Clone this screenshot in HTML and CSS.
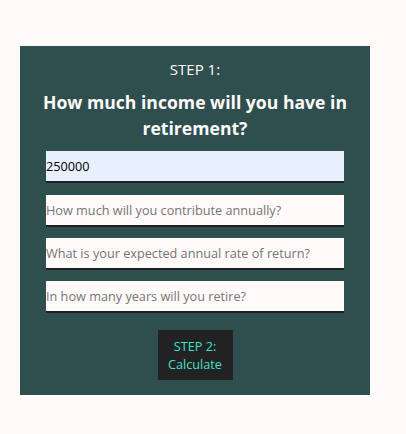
FILE: index.html
```html
<!DOCTYPE html>
<html>
<head>
<meta charset="utf-8">
<link rel="stylesheet" href="styles.css">
</head>
<body>
<div class="panel">
  <div class="step">STEP 1:</div>
  <h2 class="question">How much income will you have in retirement?</h2>
  <form class="fields">
    <input class="field filled" type="text" value="250000">
    <input class="field" type="text" placeholder="How much will you contribute annually?">
    <input class="field" type="text" placeholder="What is your expected annual rate of return?">
    <input class="field" type="text" placeholder="In how many years will you retire?">
    <button class="calc" type="button">STEP 2:<br>Calculate</button>
  </form>
</div>
</body>
</html>
```
FILE: styles.css
```css
html, body {
  margin: 0;
  padding: 0;
  background: #fffafa;
}
body {
  padding: 46px 0 0 20px;
  font-family: "Open Sans", "Noto Sans", sans-serif;
}
.panel {
  width: 350px;
  height: 349px;
  box-sizing: border-box;
  background: #2f4f4f;
  display: flex;
  flex-direction: column;
  align-items: center;
  padding-top: 13px;
}
.step {
  color: #fffafa;
  font-size: 15px;
  line-height: 20px;
}
.question {
  margin: 10px 0 0 0;
  color: #fffafa;
  font-size: 17.6px;
  font-weight: 700;
  line-height: 26px;
  text-align: center;
  width: 320px;
}
.fields {
  display: flex;
  flex-direction: column;
  align-items: center;
  margin-top: 10px;
  width: 100%;
}
.field {
  width: 298px;
  height: 32px;
  box-sizing: border-box;
  border: none;
  border-bottom: 2px solid #1f1f1f;
  background: #fffafa;
  padding: 0;
  margin: 0 0 11px 0;
  font-family: inherit;
  font-size: 12.7px;
  color: #000;
  outline: none;
}
.field::placeholder {
  color: #757575;
}
.field.filled {
  background: #e8f0fe;
  margin-bottom: 12px;
}
.calc {
  margin-top: 6px;
  width: 75px;
  height: 50px;
  background: #222;
  color: #40e0d0;
  border: none;
  font-family: inherit;
  font-size: 12.7px;
  line-height: 18px;
  padding: 0;
}
```
